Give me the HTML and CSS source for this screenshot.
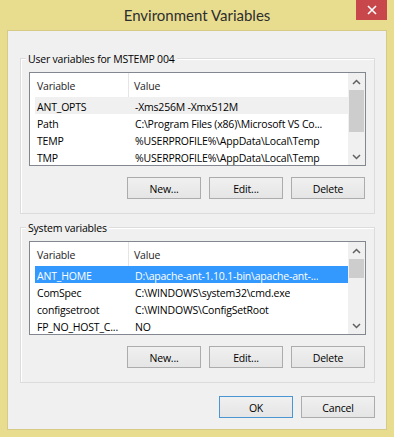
FILE: index.html
```html
<!DOCTYPE html>
<html lang="en">
<head>
    <meta charset="UTF-8">
    <meta name="viewport" content="width=device-width, initial-scale=1.0">
    <title>Environment Variables</title>
    <link rel="stylesheet" href="styles.css">
</head>
<body>
    <div class="window">
        <div class="titlebar">
            <span></span>
            <h1 class="title">Environment Variables</h1>
            <button class="close-btn" aria-label="Close">
                <svg width="10" height="10" viewBox="0 0 10 10">
                    <path d="M1 1 L9 9 M9 1 L1 9" stroke="#fff" stroke-width="1.6" fill="none"/>
                </svg>
            </button>
        </div>

        <div class="client">
            <!-- 用户变量 -->
            <div class="group">
                <span class="group-label">User variables for MSTEMP 004</span>
                <div class="list">
                    <div class="list-body">
                        <div class="list-head">
                            <span class="col-name">Variable</span>
                            <span class="col-value">Value</span>
                        </div>
                        <div class="row inactive">
                            <span class="cell-name">ANT_OPTS</span>
                            <span class="cell-value">-Xms256M -Xmx512M</span>
                        </div>
                        <div class="row">
                            <span class="cell-name">Path</span>
                            <span class="cell-value">C:\Program Files (x86)\Microsoft VS Co...</span>
                        </div>
                        <div class="row">
                            <span class="cell-name">TEMP</span>
                            <span class="cell-value">%USERPROFILE%\AppData\Local\Temp</span>
                        </div>
                        <div class="row">
                            <span class="cell-name">TMP</span>
                            <span class="cell-value">%USERPROFILE%\AppData\Local\Temp</span>
                        </div>
                    </div>
                    <div class="scrollbar">
                        <div class="arrow">
                            <svg width="9" height="6" viewBox="0 0 9 6"><path d="M1 5 L4.5 1.5 L8 5" stroke="#606060" stroke-width="1.5" fill="none"/></svg>
                        </div>
                        <div class="track">
                            <div class="thumb" style="height: 42px;"></div>
                        </div>
                        <div class="arrow">
                            <svg width="9" height="6" viewBox="0 0 9 6"><path d="M1 1 L4.5 4.5 L8 1" stroke="#606060" stroke-width="1.5" fill="none"/></svg>
                        </div>
                    </div>
                </div>
                <div class="group-buttons">
                    <button class="btn">New...</button>
                    <button class="btn">Edit...</button>
                    <button class="btn">Delete</button>
                </div>
            </div>

            <!-- 系统变量 -->
            <div class="group">
                <span class="group-label">System variables</span>
                <div class="list">
                    <div class="list-body">
                        <div class="list-head">
                            <span class="col-name">Variable</span>
                            <span class="col-value">Value</span>
                        </div>
                        <div class="row selected">
                            <span class="cell-name">ANT_HOME</span>
                            <span class="cell-value">D:\apache-ant-1.10.1-bin\apache-ant-...</span>
                        </div>
                        <div class="row">
                            <span class="cell-name">ComSpec</span>
                            <span class="cell-value">C:\WINDOWS\system32\cmd.exe</span>
                        </div>
                        <div class="row">
                            <span class="cell-name">configsetroot</span>
                            <span class="cell-value">C:\WINDOWS\ConfigSetRoot</span>
                        </div>
                        <div class="row">
                            <span class="cell-name">FP_NO_HOST_C...</span>
                            <span class="cell-value">NO</span>
                        </div>
                    </div>
                    <div class="scrollbar">
                        <div class="arrow">
                            <svg width="9" height="6" viewBox="0 0 9 6"><path d="M1 5 L4.5 1.5 L8 5" stroke="#606060" stroke-width="1.5" fill="none"/></svg>
                        </div>
                        <div class="track">
                            <div class="thumb" style="height: 19px;"></div>
                        </div>
                        <div class="arrow">
                            <svg width="9" height="6" viewBox="0 0 9 6"><path d="M1 1 L4.5 4.5 L8 1" stroke="#606060" stroke-width="1.5" fill="none"/></svg>
                        </div>
                    </div>
                </div>
                <div class="group-buttons">
                    <button class="btn">New...</button>
                    <button class="btn">Edit...</button>
                    <button class="btn">Delete</button>
                </div>
            </div>

            <div class="dialog-buttons">
                <button class="btn default">OK</button>
                <button class="btn">Cancel</button>
            </div>
        </div>
    </div>
</body>
</html>
```

FILE: styles.css
```css
:root {
    --frame: #e8dc8e;
    --face: #f0f0f0;
    --select: #3399ff;
}
* {
    margin: 0;
    padding: 0;
    box-sizing: border-box;
}
body {
    background: var(--frame);
    font-family: "Open Sans", "Liberation Sans", sans-serif;
    font-size: 10.5px;
    letter-spacing: -0.2px;
    color: #000;
    width: 394px;
    height: 437px;
    overflow: hidden;
}
.window {
    display: flex;
    flex-direction: column;
    height: 437px;
}
.titlebar {
    height: 30px;
    display: grid;
    grid-template-columns: 1fr auto 1fr;
    align-items: start;
}
.title {
    font-family: Lato, "Open Sans", sans-serif;
    font-size: 15px;
    font-weight: normal;
    letter-spacing: 0;
    color: #2e2e2e;
    line-height: 30px;
}
.close-btn {
    justify-self: end;
    margin-right: 7px;
    width: 31px;
    height: 20px;
    background: #c7474b;
    border: none;
    display: flex;
    align-items: center;
    justify-content: center;
}
.client {
    flex: 1;
    margin: 0 7px 7px;
    background: var(--face);
    border: 1px solid #d6cb86;
    padding: 27px 11px 0 12px;
    display: flex;
    flex-direction: column;
}
.group {
    position: relative;
    border: 1px solid #dcdcdc;
    box-shadow: inset 1px 1px 0 #fff;
    padding: 13px 8px 14px;
    margin-bottom: 13px;
}
.group-label {
    position: absolute;
    top: -8px;
    left: 5px;
    padding: 0 2px;
    line-height: 16px;
    background: var(--face);
}
.list {
    display: flex;
    height: 94px;
    border: 1px solid #828790;
    background: #fff;
}
.list-body {
    flex: 1;
    overflow: hidden;
}
.list-head {
    display: flex;
    height: 24px;
    align-items: stretch;
    color: #1e1e1e;
}
.col-name {
    width: 99px;
    padding: 2px 0 0 7px;
    border-right: 1px solid #e5e5e5;
    display: flex;
    align-items: center;
}
.col-value {
    padding: 2px 0 0 5px;
    display: flex;
    align-items: center;
}
.row {
    display: flex;
    align-items: center;
    height: 17px;
    padding-top: 2px;
    margin-left: 5px;
    white-space: nowrap;
}
.row.inactive {
    background: #f0f0f0;
}
.row.selected {
    background: var(--select);
    color: #fff;
}
.cell-name {
    width: 94px;
    padding-left: 2px;
    overflow: hidden;
}
.cell-value {
    padding-left: 6px;
    overflow: hidden;
}
.scrollbar {
    width: 17px;
    background: #f0f0f0;
    display: flex;
    flex-direction: column;
}
.arrow {
    height: 17px;
    display: flex;
    align-items: center;
    justify-content: center;
}
.track {
    flex: 1;
    padding: 0 1px;
}
.thumb {
    background: #cdcdcd;
}
.group-buttons,
.dialog-buttons {
    display: flex;
    justify-content: flex-end;
    gap: 8px;
}
.group-buttons {
    margin-top: 11px;
    padding-right: 1px;
}
.btn {
    width: 74px;
    height: 22px;
    padding-top: 1px;
    border: 1px solid #acacac;
    background: linear-gradient(#f0f0f0, #e5e5e5);
    font-family: "Open Sans", "Liberation Sans", sans-serif;
    font-size: 10.5px;
    letter-spacing: -0.2px;
    color: #000;
}
.btn.default {
    border-color: #4a95d4;
}
```
